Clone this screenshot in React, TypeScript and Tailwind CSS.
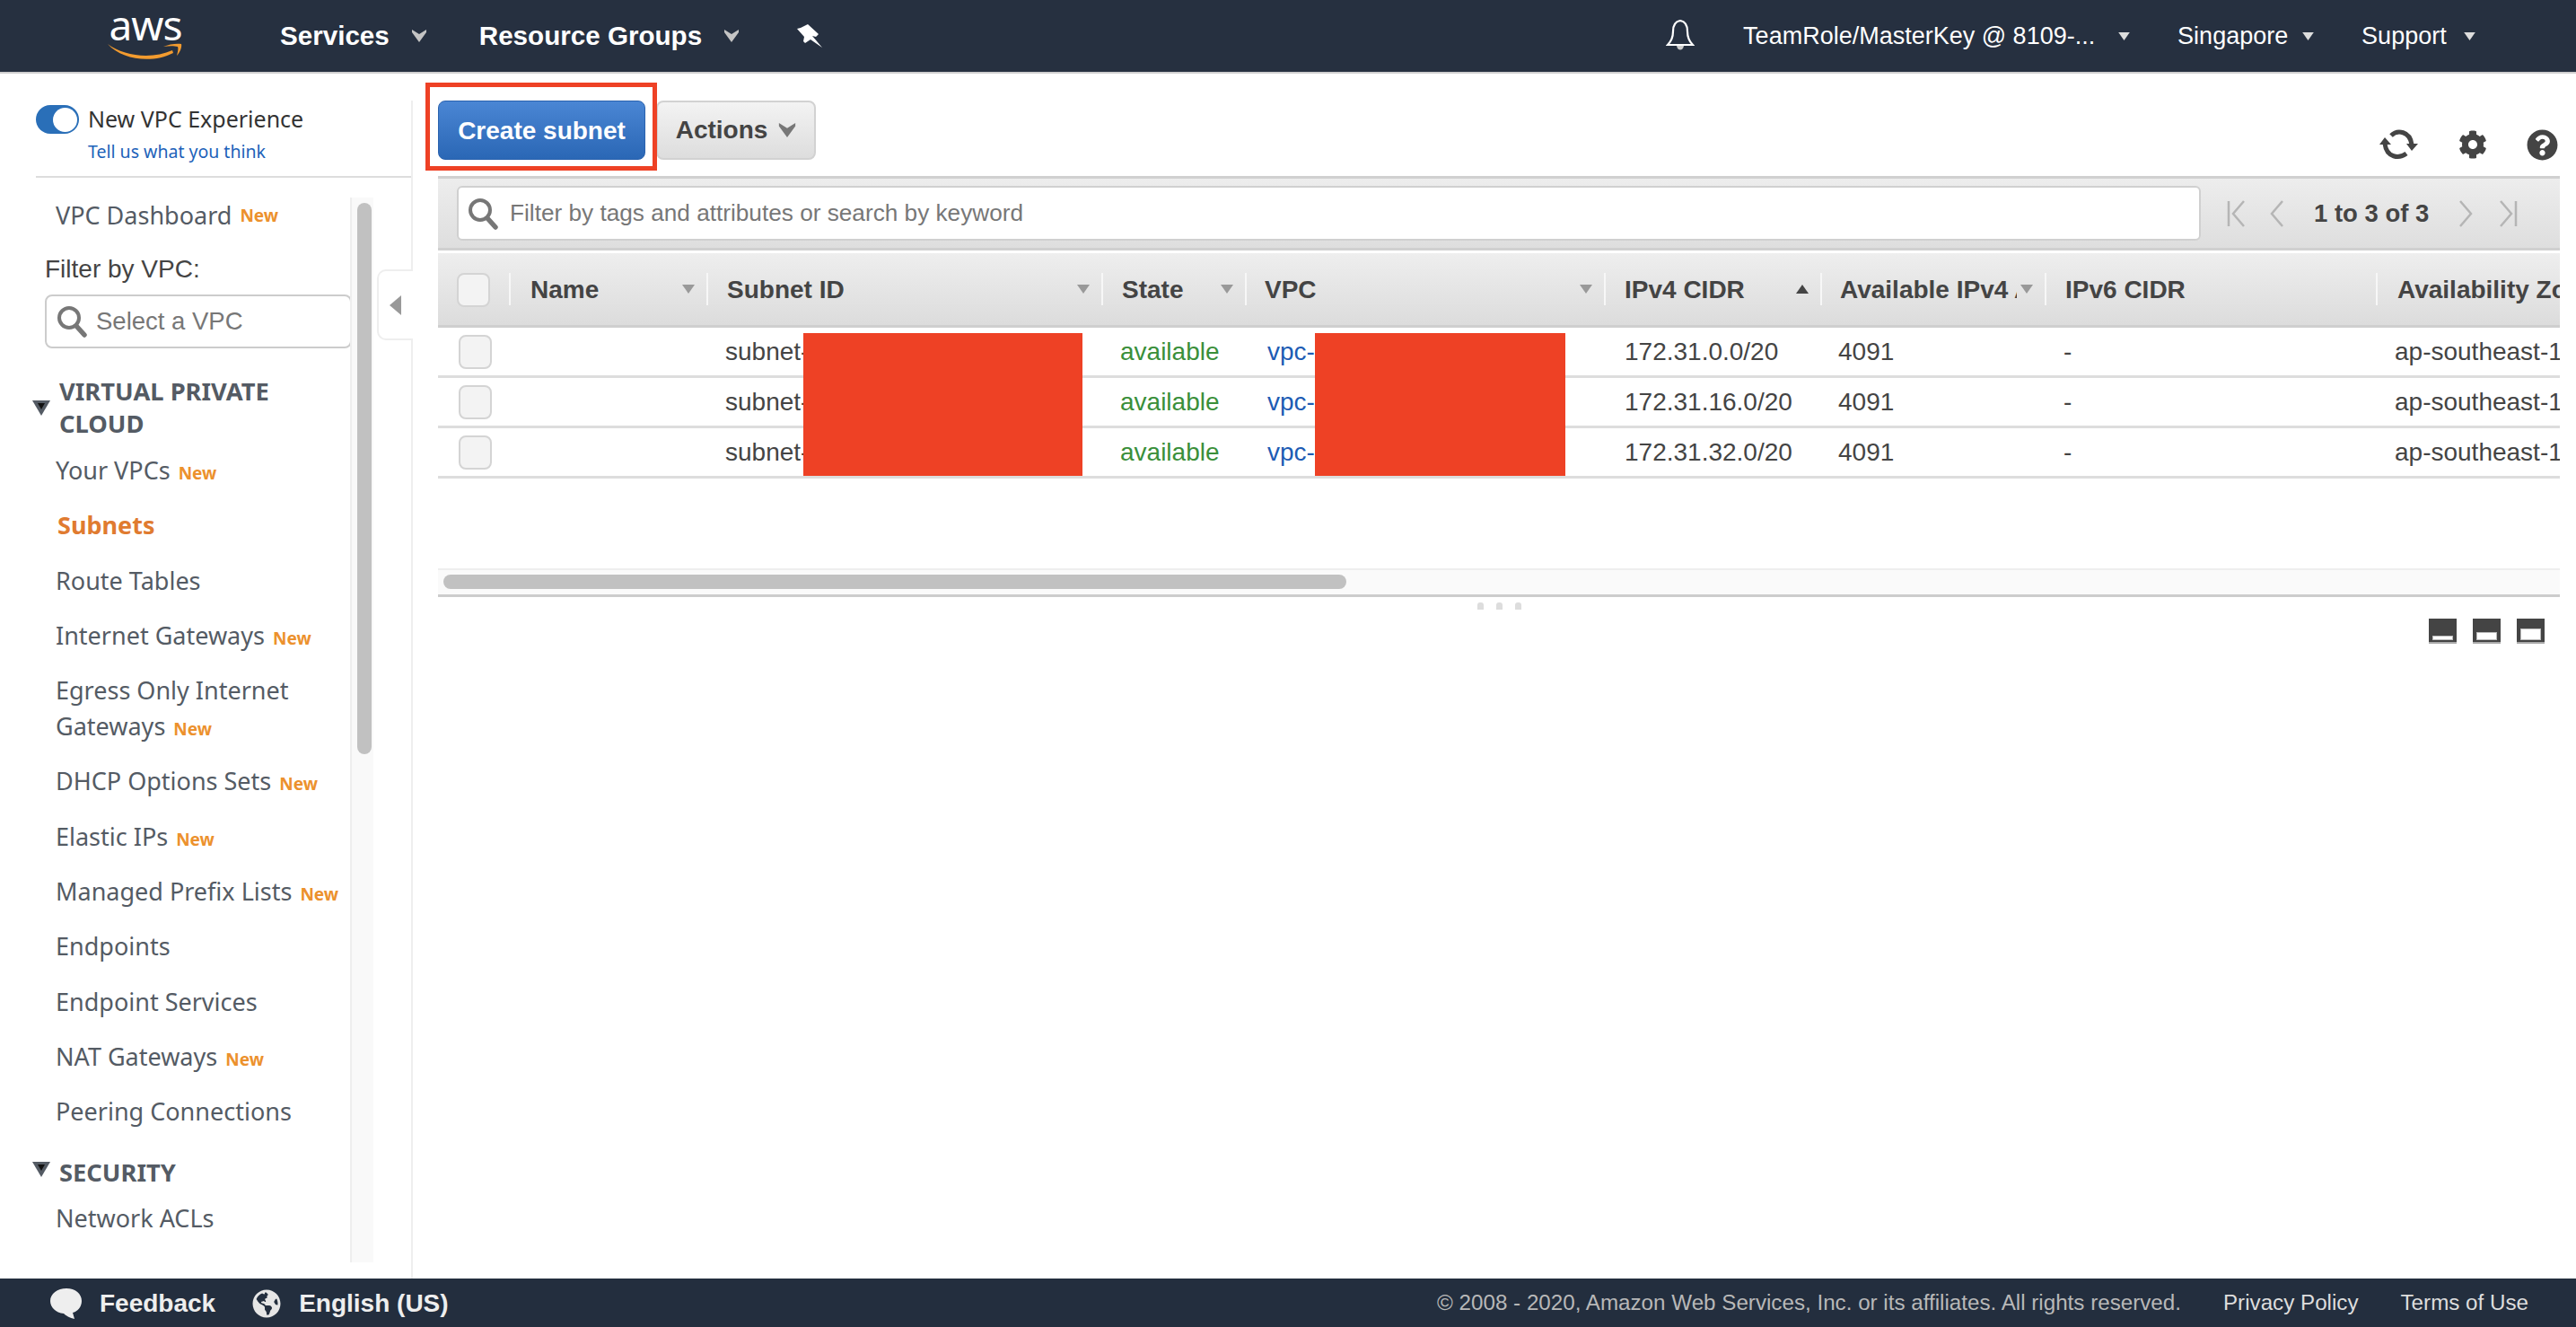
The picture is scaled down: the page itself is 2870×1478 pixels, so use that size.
import React from "react";
import { FaCog, FaQuestionCircle, FaGlobeAmericas } from "react-icons/fa";

const Caret = ({ c = "#c4c4c4", w = 16, h = 14 }: { c?: string; w?: number; h?: number }) => (
  <svg width={w} height={h} viewBox="0 0 16 14" className="shrink-0">
    <path d="M0 0 L8 5 L16 0 L16 3 L8 14 L0 3 Z" fill={c} />
  </svg>
);
const Tri = ({ c = "#ddd", s = 10, up = false }: { c?: string; s?: number; up?: boolean }) => (
  <svg width={s + 4} height={s} viewBox="0 0 14 10" className="shrink-0">
    <path d={up ? "M0 10 L14 10 L7 0 Z" : "M0 0 L14 0 L7 10 Z"} fill={c} />
  </svg>
);
const Glass = ({ s = 36 }: { s?: number }) => (
  <svg width={s} height={s} viewBox="0 0 36 36" className="shrink-0">
    <circle cx="15" cy="14" r="11" fill="none" stroke="#777" strokeWidth="4" />
    <path d="M23 23 L32 33" stroke="#777" strokeWidth="5.5" strokeLinecap="round" />
  </svg>
);
const New = () => <span className="ml-[9px] text-[19px] leading-none font-bold text-[#ec912d]">New</span>;

function Item({ label, isNew, wrap }: { label: string; isNew?: boolean; wrap?: string }) {
  return (
    <div className="pl-[62px] text-[27px] leading-[40px] text-[#545b64] whitespace-nowrap">
      {label}
      {wrap ? <br /> : null}
      {wrap}
      {isNew ? <New /> : null}
    </div>
  );
}

const SectionTri = () => (
  <svg width="20" height="18" viewBox="0 0 20 18" className="shrink-0">
    <path d="M0 0 H20 L10 17 Z" fill="#545b64" />
    <path d="M6 3 H14 L10 10 Z" fill="#111" />
  </svg>
);

function Sidebar() {
  return (
    <aside className="relative w-[460px] shrink-0 mt-[30px] border-r-2 border-[#eeeeee] flex flex-col font-['Noto_Sans',sans-serif]">
      <div className="ml-[40px] h-[86px] border-b-2 border-[#dddddd]">
        <div className="flex items-center h-[42px]">
          <div className="w-[48px] h-[32px] rounded-full bg-[#2a6fb8] flex items-center justify-end pr-[2px] shrink-0">
            <div className="w-[27px] h-[27px] rounded-full bg-white" />
          </div>
          <span className="ml-[10px] text-[25px] text-[#333333] whitespace-nowrap">New VPC Experience</span>
        </div>
        <div className="ml-[58px] mt-[2px] text-[19.5px] leading-[26px] text-[#1c62b9] whitespace-nowrap">Tell us what you think</div>
      </div>
      <div className="flex flex-1 mt-[22px] min-h-0">
        <div className="w-[392px] shrink-0 border-r-2 border-[#eeeeee] overflow-hidden">
          <div className="h-[40px] flex items-center pl-[62px] text-[27px] text-[#545b64] whitespace-nowrap">
            VPC Dashboard
            <New />
          </div>
          <div className="mt-[22px] pl-[50px] font-['Liberation_Sans',sans-serif] text-[28px] leading-[36px] text-[#444444]">Filter by VPC:</div>
          <div className="mt-[10px] ml-[50px] w-[342px] h-[60px] rounded-[8px] border-2 border-[#cccccc] flex items-center pl-[10px] gap-[9px] font-['Liberation_Sans',sans-serif] text-[27.5px] text-[#777777]">
            <Glass />
            Select a VPC
          </div>
          <div className="mt-[30px] flex pl-[36px]">
            <div className="mt-[28px]">
              <SectionTri />
            </div>
            <div className="ml-[10px] text-[27.3px] leading-[36px] font-bold text-[#545b64]">
              VIRTUAL PRIVATE
              <br />
              CLOUD
            </div>
          </div>
          <div className="mt-[14px] flex flex-col gap-[21.3px]">
            <Item label="Your VPCs" isNew />
            <div className="pl-[64px] text-[27px] leading-[40px] font-bold text-[#e07b30]">Subnets</div>
            <Item label="Route Tables" />
            <Item label="Internet Gateways" isNew />
            <Item label="Egress Only Internet" wrap="Gateways" isNew />
            <Item label="DHCP Options Sets" isNew />
            <Item label="Elastic IPs" isNew />
            <Item label="Managed Prefix Lists" isNew />
            <Item label="Endpoints" />
            <Item label="Endpoint Services" />
            <Item label="NAT Gateways" isNew />
            <Item label="Peering Connections" />
          </div>
          <div className="mt-[30px] flex items-center pl-[36px]">
            <div className="-mt-[6px]">
              <SectionTri />
            </div>
            <div className="ml-[10px] text-[27.3px] leading-[36px] font-bold text-[#545b64]">SECURITY</div>
          </div>
          <div className="mt-[13px]">
            <Item label="Network ACLs" />
          </div>
        </div>
        <div className="w-[24px] shrink-0 bg-[#f9f9f9] pl-[6px] pt-[6px]">
          <div className="w-[16px] h-[614px] rounded-[8px] bg-[#c1c1c1]" />
        </div>
      </div>
      <div className="h-[18px] shrink-0 bg-white" />
      <div className="absolute left-[420px] top-[188px] w-[40px] h-[79px] bg-white rounded-l-[10px] border-2 border-r-0 border-[#eeeeee] flex items-center pl-[12px]">
        <svg width="14" height="22" viewBox="0 0 14 22">
          <path d="M13 0 V22 L0 11 Z" fill="#999999" />
        </svg>
      </div>
    </aside>
  );
}

const cols = [
  { w: 79 },
  { w: 220, h: "Name", hp: 22, s: "d" },
  { w: 440, h: "Subnet ID", hp: 21, s: "d" },
  { w: 160, h: "State", hp: 21, s: "d" },
  { w: 400, h: "VPC", hp: 20, s: "d" },
  { w: 241, h: "IPv4 CIDR", hp: 21, s: "u" },
  { w: 250, h: "Available IPv4 Addresses", hp: 20, s: "d" },
  { w: 369, h: "IPv6 CIDR", hp: 21, s: "" },
  { w: 300, h: "Availability Zone", hp: 22, s: "" },
];

const rows = ["172.31.0.0/20", "172.31.16.0/20", "172.31.32.0/20"];

const Check = ({ ml }: { ml: number }) => (
  <div style={{ marginLeft: ml }} className="w-[37px] h-[38px] rounded-[8px] border-2 border-[#d4d4d4] bg-[#f3f3f3] shrink-0" />
);

function Pager() {
  const st = { stroke: "#b5b5b5", strokeWidth: 2.5, fill: "none" };
  return (
    <div className="flex items-center shrink-0 w-[400px]">
      <svg width="24" height="30" viewBox="0 0 24 30" className="ml-[28px]">
        <path d="M3 1 V29 M20 1 L8 15 L20 29" {...st} />
      </svg>
      <svg width="18" height="30" viewBox="0 0 18 30" className="ml-[24px]">
        <path d="M15 1 L3 15 L15 29" {...st} />
      </svg>
      <span className="ml-[32px] text-[27.5px] font-bold text-[#444444] whitespace-nowrap">1 to 3 of 3</span>
      <svg width="18" height="30" viewBox="0 0 18 30" className="ml-[32px]">
        <path d="M3 1 L15 15 L3 29" {...st} />
      </svg>
      <svg width="24" height="30" viewBox="0 0 24 30" className="ml-[26px]">
        <path d="M21 1 V29 M4 1 L16 15 L4 29" {...st} />
      </svg>
    </div>
  );
}

const PanelIcon = ({ top }: { top: number }) => (
  <div className="w-[31px] h-[28px] bg-[#444444] border-b-2 border-[#aaaaaa] flex items-end px-[4px] pb-[2px]">
    <div style={{ height: top }} className="w-full bg-white border border-[#bbbbbb]" />
  </div>
);

function Main() {
  return (
    <main className="flex-1 min-w-0 pl-[28px] pr-[18px] font-['Liberation_Sans',sans-serif]">
      <div className="relative h-[114px] pt-[30px] flex">
        <button className="w-[231px] h-[66px] pt-[2px] rounded-[8px] bg-gradient-to-b from-[#4a86d4] to-[#2a67b5] border border-[#2a62ae] text-[28px] font-bold text-white">
          Create subnet
        </button>
        <button className="ml-[12px] w-[178px] h-[66px] rounded-[8px] bg-gradient-to-b from-[#f3f3f3] to-[#dddddd] border-2 border-[#d2d2d2] text-[28px] font-bold text-[#444444] flex items-center justify-center gap-[12px]">
          Actions
          <Caret c="#777777" w={20} h={16} />
        </button>
        <div className="absolute left-[-14px] top-[10px] w-[258px] h-[98px] border-[5px] border-[#ee4125] pointer-events-none" />
        <div className="ml-auto mt-[31px] h-[36px] pr-[2px] flex items-center gap-[44px] text-[#444444]">
          <svg width="44" height="34" viewBox="0 0 44 34" className="shrink-0">
            <path d="M13 7 C20 0 34 2 36 17" fill="none" stroke="#444" strokeWidth="5" />
            <path d="M6 16 C8 32 22 33 30 27" fill="none" stroke="#444" strokeWidth="5" />
            <path d="M0 17 H13 L6 9 Z" fill="#444" />
            <path d="M30 16 H43 L36 24 Z" fill="#444" />
          </svg>
          <FaCog size={32} />
          <FaQuestionCircle size={35} />
        </div>
      </div>

      <div className="h-[83px] border-t-[3px] border-b-[3px] border-[#d0d0d0] bg-gradient-to-b from-[#ededed] to-[#dedede] flex items-center pl-[21px]">
        <div className="flex-1 min-w-0 h-[61px] rounded-[6px] bg-white border-2 border-[#d0d0d0] flex items-center pl-[9px] gap-[12px] text-[26.2px] text-[#777777] whitespace-nowrap overflow-hidden">
          <Glass />
          Filter by tags and attributes or search by keyword
        </div>
        <Pager />
      </div>

      <div className="relative mt-[3px] overflow-hidden">
        <div className="flex h-[83px] border-b-[3px] border-[#cfcfcf] bg-gradient-to-b from-[#eeeeee] to-[#dcdcdc] items-start pt-[22px]">
          {cols.map((c, i) =>
            i === 0 ? (
              <div key={i} style={{ width: c.w }} className="shrink-0">
                <Check ml={21} />
              </div>
            ) : (
              <div key={i} style={{ width: c.w, paddingLeft: c.hp }} className="shrink-0 h-[36px] border-l-2 border-[#f7f7f7] flex items-center pr-[13px]">
                <span className="flex-1 min-w-0 mt-[1px] overflow-hidden whitespace-nowrap text-[28px] font-bold text-[#444444]">{c.h}</span>
                {c.s === "d" ? (
                  <span className="ml-[4px] flex"><Tri c="#999999" /></span>
                ) : c.s === "u" ? (
                  <span className="ml-[4px] flex"><Tri c="#444444" up /></span>
                ) : null}
              </div>
            )
          )}
        </div>
        {rows.map((r) => (
          <div key={r} className="flex items-center h-[56px] border-b-[3px] border-[#dddddd] text-[28px] text-[#444444] whitespace-nowrap">
            <div className="w-[79px] shrink-0">
              <Check ml={23} />
            </div>
            <div className="w-[241px] shrink-0" />
            <div className="w-[440px] shrink-0">subnet-</div>
            <div className="w-[164px] shrink-0 text-[#3a8f3a]">available</div>
            <div className="w-[398px] shrink-0 text-[#1d5cb4]">vpc-</div>
            <div className="w-[238px] shrink-0">{r}</div>
            <div className="w-[251px] shrink-0">4091</div>
            <div className="w-[369px] shrink-0">-</div>
            <div className="w-[200px] shrink-0">ap-southeast-1a</div>
          </div>
        ))}
        <div className="absolute left-[407px] top-[89px] w-[311px] h-[159px] bg-[#ee4125]" />
        <div className="absolute left-[977px] top-[89px] w-[279px] h-[159px] bg-[#ee4125]" />
        <div className="h-[100px]" />
        <div className="h-[32px] bg-[#fafafa] border-t-2 border-b-[3px] border-t-[#eeeeee] border-b-[#cccccc] pl-[6px] pt-[5px]">
          <div className="w-[1006px] h-[16px] rounded-[8px] bg-[#c1c1c1]" />
        </div>
      </div>

      <div className="h-[20px] flex items-center justify-center gap-[14px]">
        {[0, 1, 2].map((i) => (
          <div key={i} className="w-[7px] h-[8px] rounded-t-[3px] bg-[#dddddd]" />
        ))}
      </div>
      <div className="mt-[4px] flex justify-end gap-[18px] pr-[17px]">
        <PanelIcon top={5} />
        <PanelIcon top={9} />
        <PanelIcon top={13} />
      </div>
    </main>
  );
}

export default function App() {
  return (
    <div className="h-screen w-full overflow-hidden flex flex-col bg-white font-['Liberation_Sans',sans-serif]">
      <header className="h-[82px] shrink-0 bg-[#263040] border-b-2 border-[#cfcfcf] flex items-center text-white">
        <div className="ml-[120px] w-[84px] h-[66px] flex flex-col items-center shrink-0 mt-[-4px]">
          <span className="font-['Noto_Sans',sans-serif] text-[46px] leading-[44px] tracking-[-1px] text-white">aws</span>
          <svg width="84" height="20" viewBox="0 0 84 20" className="-mt-[1px]">
            <path d="M0 1 C18 15 50 18 72 8 L73 11 C50 23 16 19 0 1 Z" fill="#f29b2f" />
            <path d="M62 4 C68 1 78 0 82 1 C83 5 80 11 77 14 C78 10 79 6 78 4 C74 3 68 3 62 4 Z" fill="#f29b2f" />
          </svg>
        </div>
        <span className="ml-[108px] text-[29.6px] font-bold">Services</span>
        <span className="ml-[25px]"><Caret /></span>
        <span className="ml-[59px] text-[29.6px] font-bold whitespace-nowrap">Resource Groups</span>
        <span className="ml-[25px]"><Caret /></span>
        <svg width="29" height="28" viewBox="9 11 29 28" className="ml-[65px] shrink-0">
          <path d="M21 12 L33 23 L30 26 L26 25 L37 38 L24 29 L18 33 L16 31 L17 26 L9 17 L13 16 Z" fill="#ffffff" />
        </svg>
        <svg width="32" height="36" viewBox="0 0 32 36" className="ml-[939px] shrink-0">
          <path d="M16 1 C10 2 8 7 8 13 C8 20 6 24 2 28 H30 C26 24 24 20 24 13 C24 7 22 2 16 1 Z" fill="none" stroke="#fff" strokeWidth="2.2" />
          <path d="M12 29 C13 35 19 35 20 29 Z" fill="#ccc" />
        </svg>
        <span className="ml-[54px] text-[27px] whitespace-nowrap w-[389px] shrink-0">TeamRole/MasterKey @ 8109-...</span>
        <span className="ml-[29px]"><Tri s={9} /></span>
        <span className="ml-[53px] text-[27px] w-[122px] shrink-0">Singapore</span>
        <span className="ml-[17px]"><Tri s={9} /></span>
        <span className="ml-[53px] text-[27px] w-[96px] shrink-0">Support</span>
        <span className="ml-[18px]"><Tri s={9} /></span>
      </header>

      <div className="flex-1 min-h-0 flex">
        <Sidebar />
        <Main />
      </div>

      <footer className="h-[54px] pt-[1px] shrink-0 bg-[#232e3e] flex items-center text-[28px] text-[#eeeeee] whitespace-nowrap">
        <svg width="36" height="34" viewBox="0 0 36 34" className="ml-[56px] shrink-0">
          <path d="M18 0 C28 0 35 6 35 14 C35 21 30 26 25 27 L27 34 C22 33 17 30 15 28 C6 27 0 21 0 14 C0 6 8 0 18 0 Z" fill="#eeeeee" />
        </svg>
        <span className="ml-[19px] font-bold">Feedback</span>
        <FaGlobeAmericas size={32} className="ml-[41px] text-[#e6e6e6] shrink-0" />
        <span className="ml-[20px] font-bold">English (US)</span>
        <span className="ml-auto text-[24.2px] text-[#b8b8b8]">© 2008 - 2020, Amazon Web Services, Inc. or its affiliates. All rights reserved.</span>
        <span className="ml-[47px] text-[24.2px] text-[#dddddd]">Privacy Policy</span>
        <span className="ml-[47px] mr-[53px] text-[24.2px] text-[#dddddd]">Terms of Use</span>
      </footer>
    </div>
  );
}
